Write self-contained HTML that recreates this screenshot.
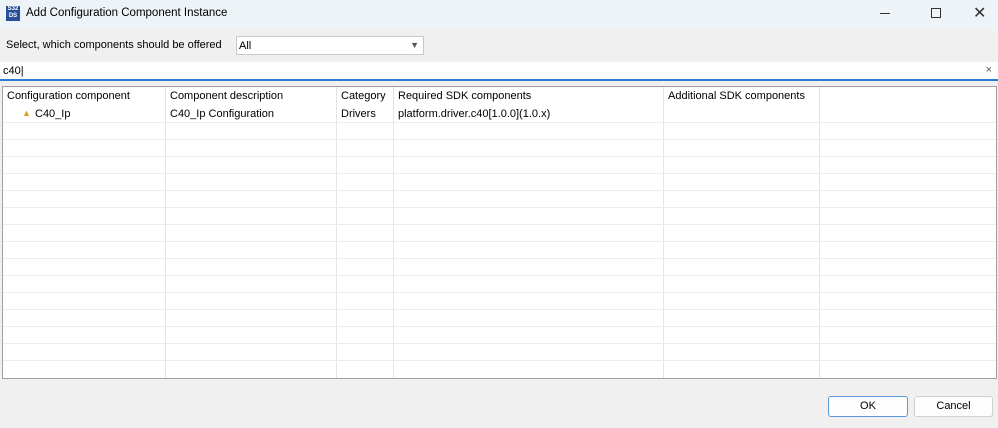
<!DOCTYPE html>
<html><head><style>
*{margin:0;padding:0;box-sizing:border-box}
body{width:998px;height:428px;background:#f0f0f0;font-family:"Liberation Sans",sans-serif;font-size:11px;color:#000;position:relative;overflow:hidden}
.abs{position:absolute}
.title{left:0;top:0;width:998px;height:29px;background:#eef3f7}
.tbl{left:2px;top:86px;width:995px;height:293px;background:#fff;border:1px solid #a0a0a0;overflow:hidden}
.hl{position:absolute;left:0;width:100%;height:1px;background:#ececec}
.vl{position:absolute;top:0;height:100%;width:1px;background:#e4e4e4}
.btn{height:21px;background:#fdfdfd;border:1px solid #d0d0d0;border-radius:3px;text-align:center;line-height:19px}
</style></head><body>
<div class="abs title"></div>
<div class="abs" style="left:6px;top:6px;width:14px;height:15px;background:#2a4f9a;color:#fff;font-size:6px;line-height:7px;text-align:center;font-weight:bold">S32<br>DS</div>
<div class="abs" style="left:26px;top:7px;font-size:11.5px">Add Configuration Component Instance</div>
<div class="abs" style="left:880px;top:13px;width:10px;height:1px;background:#333"></div>
<div class="abs" style="left:931px;top:8px;width:10px;height:10px;border:1px solid #333"></div>
<div class="abs" style="left:973px;top:3px;font-size:16px;color:#333">&#10005;</div>
<div class="abs" style="left:6px;top:39px">Select, which components should be offered</div>
<div class="abs" style="left:236px;top:36px;width:188px;height:19px;background:#fff;border:1px solid #c8c8c8"><span style="position:absolute;left:2px;top:3px">All</span><span style="position:absolute;right:4px;top:3px;font-size:9px;color:#555">&#9660;</span></div>
<div class="abs" style="left:0;top:62px;width:998px;height:19px;background:#fff;border-bottom:2px solid #2b7bd0"><span style="position:absolute;left:3px;top:3px">c40|</span><span style="position:absolute;right:6px;top:2px;color:#555">&#215;</span></div>
<div class="abs tbl">
<div class="vl" style="left:162px"></div><div class="vl" style="left:333px"></div><div class="vl" style="left:390px"></div><div class="vl" style="left:660px"></div><div class="vl" style="left:816px"></div>
<div class="hl" style="top:35px"></div><div class="hl" style="top:52px"></div><div class="hl" style="top:69px"></div><div class="hl" style="top:86px"></div><div class="hl" style="top:103px"></div><div class="hl" style="top:120px"></div><div class="hl" style="top:137px"></div><div class="hl" style="top:154px"></div><div class="hl" style="top:171px"></div><div class="hl" style="top:188px"></div><div class="hl" style="top:205px"></div><div class="hl" style="top:222px"></div><div class="hl" style="top:239px"></div><div class="hl" style="top:256px"></div><div class="hl" style="top:273px"></div>
<div class="abs" style="left:4px;top:3px">Configuration component</div>
<div class="abs" style="left:167px;top:3px">Component description</div>
<div class="abs" style="left:338px;top:3px">Category</div>
<div class="abs" style="left:395px;top:3px">Required SDK components</div>
<div class="abs" style="left:665px;top:3px">Additional SDK components</div>
<div class="abs" style="left:19px;top:21px;font-size:9px;color:#d9a020">&#9650;</div>
<div class="abs" style="left:32px;top:21px">C40_Ip</div>
<div class="abs" style="left:167px;top:21px">C40_Ip Configuration</div>
<div class="abs" style="left:338px;top:21px">Drivers</div>
<div class="abs" style="left:395px;top:21px">platform.driver.c40[1.0.0](1.0.x)</div>
</div>
<div class="abs btn" style="left:828px;top:396px;width:80px;border-color:#5a9ad8">OK</div>
<div class="abs btn" style="left:914px;top:396px;width:79px">Cancel</div>
</body></html>
